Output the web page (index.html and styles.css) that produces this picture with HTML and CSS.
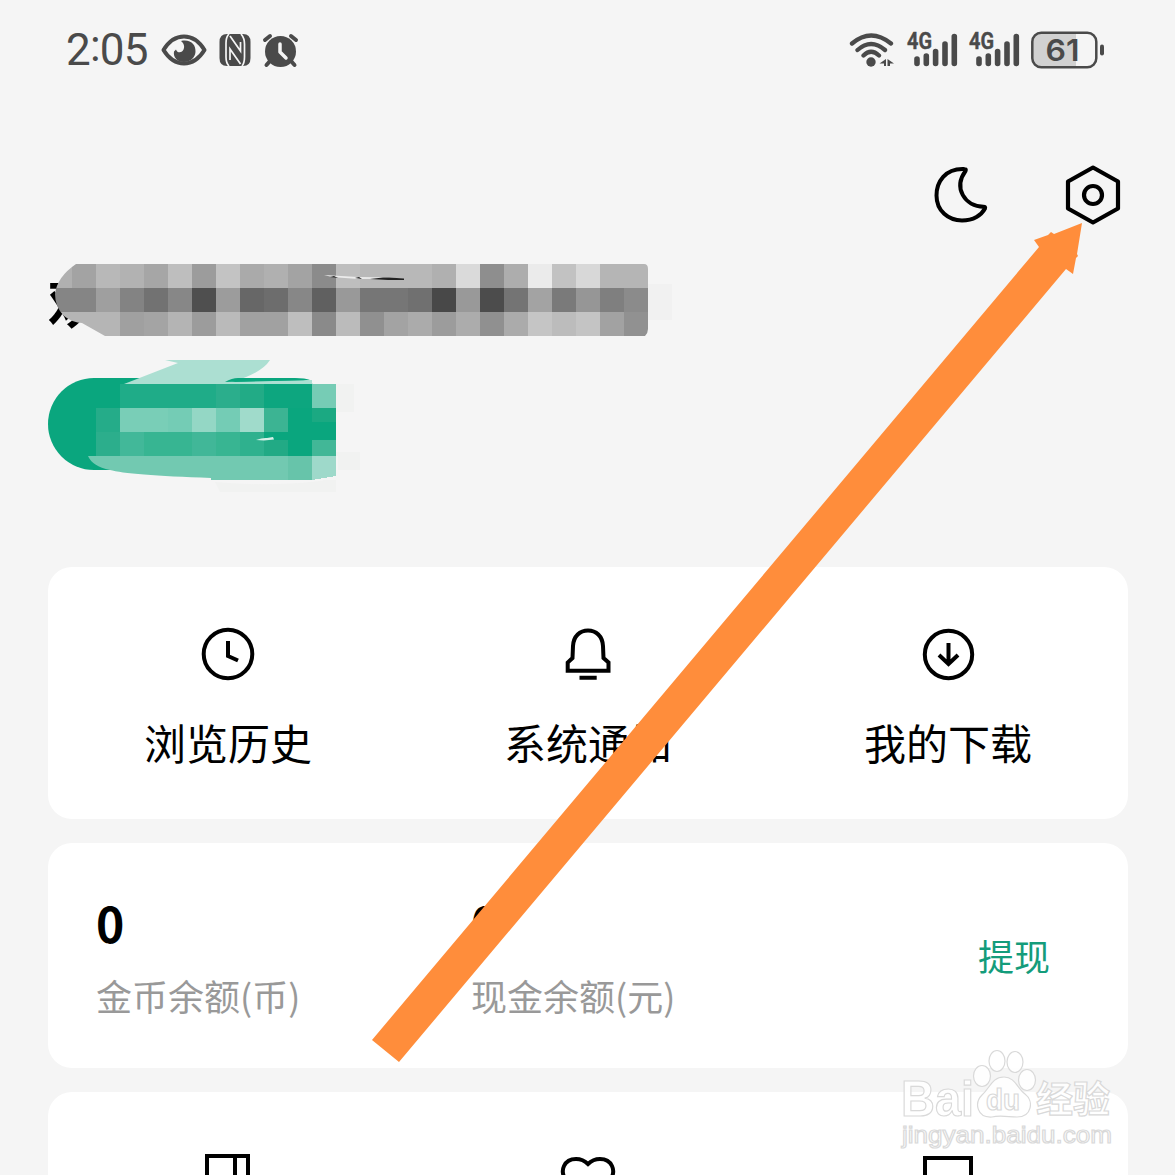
FILE: index.html
```html
<!DOCTYPE html>
<html lang="zh-CN">
<head>
<meta charset="utf-8">
<title>我的</title>
<link rel="stylesheet" href="styles.css">
</head>
<body>
<div class="screen">
  <header class="status">
    <div class="status-left">
      <span class="time">2<i>:</i>05</span>
      <svg class="eye" width="46" height="34" viewBox="0 0 46 34"><path d="M2.5 17C8 8 15 3.500 23 3.500S38 8 43.500 17C38 26 31 30.500 23 30.500S8 26 2.500 17Z" fill="none" stroke="#4a4a4a" stroke-width="4" stroke-linejoin="round"/><path d="M20 8C30 6 35 12 34.500 19C34 25 29 29 23 29C16 29 12 24 13 18.500L15 16.500C16 19.500 19 20 21 18.500C24 16 24 11 20 8Z" fill="#4a4a4a"/></svg>
      <svg class="nfc" width="32" height="33" viewBox="0 0 32 33"><path d="M8 0H24Q31.500 0 31.500 8V24Q31.500 32 24 32H8Q.5 32 .5 24V8Q.5 0 8 0Z" fill="#4a4a4a"/><path d="M10 0Q7 3 7 9V23Q7 29 10 32M11 2L21.500 17V8M22 0Q25.500 4 25.500 10V23Q25.500 29 23 32M21.500 30L11 15V26" fill="none" stroke="#f5f5f5" stroke-width="1.700"/></svg>
      <svg class="alarm" width="37" height="35" viewBox="0 0 37 35"><g stroke="#4a4a4a" stroke-width="4" stroke-linecap="round"><path d="M3 7L8 3M29 3L34 7M8 28L4.500 32M29 28L32.500 32"/></g><circle cx="18.500" cy="18.500" r="15.500" fill="#4a4a4a"/><path d="M18 11V19L24 25" fill="none" stroke="#f5f5f5" stroke-width="3.500" stroke-linecap="round" stroke-linejoin="round"/></svg>
    </div>
    <div class="status-right">
      <svg class="wifi" width="46" height="36" viewBox="0 0 46 36"><g fill="none" stroke="#4a4a4a" stroke-width="4.300" stroke-linecap="round"><path d="M3 11.500Q22 -4.500 42 11.500M8.500 18Q22 6 36 18M14.500 23.500Q22 16 30 23.500"/></g><circle cx="22" cy="30" r="4.700" fill="#4a4a4a"/><path d="M37 27V34H35V31.500H30.500ZM38.500 27L45 31.500H41V34H38.500Z" fill="#4a4a4a"/></svg>
      <svg class="signal" width="51" height="36" viewBox="0 0 51 36"><text x="0" y="17" class="net" textLength="25" lengthAdjust="spacingAndGlyphs">4G</text><path d="M10 27V31.500M19.300 24V31.500M28.600 19.500V31.500M38 12V31.500M47.300 4.500V31.500" stroke="#4a4a4a" stroke-width="5.600" stroke-linecap="round"/></svg>
      <svg class="signal" width="51" height="36" viewBox="0 0 51 36"><text x="0" y="17" class="net" textLength="25" lengthAdjust="spacingAndGlyphs">4G</text><path d="M10 27V31.500M19.300 24V31.500M28.600 19.500V31.500M38 12V31.500M47.300 4.500V31.500" stroke="#4a4a4a" stroke-width="5.600" stroke-linecap="round"/></svg>
      <svg class="battery" width="74" height="38" viewBox="0 0 74 38"><path d="M10 2H45V36H10Q2 36 2 28V10Q2 2 10 2Z" fill="#d1d1d1"/><rect x="1.300" y="1.800" width="64" height="34.400" rx="9" fill="none" stroke="#4a4a4a" stroke-width="2.500"/><rect x="69" y="13.500" width="4" height="11" rx="2" fill="#4a4a4a"/><text x="14.500" y="30" class="level" textLength="34" lengthAdjust="spacingAndGlyphs">61</text></svg>
    </div>
  </header>

  <nav class="actions">
    <svg width="56" height="60" viewBox="0 0 56 60"><path d="M30.500 4C11 3 2.500 17 2.500 30.500C2.500 46 14.500 55.500 28 55.500C39.500 55.500 47.500 50 51 43.500Q51.700 41.700 49.500 41.700C31 41.500 19 23 31.500 6Q32.500 4 30.500 4Z" fill="none" stroke="#000" stroke-width="4" stroke-linejoin="round"/></svg>
    <svg width="56" height="60" viewBox="0 0 56 60"><path d="M28 2.500L53 16.500V43.500L28 57.500L3 43.500V16.500Z" fill="none" stroke="#000" stroke-width="4.200" stroke-linejoin="round"/><circle cx="28" cy="30" r="9" fill="none" stroke="#000" stroke-width="4.200"/></svg>
  </nav>

  <section class="profile">
    <div class="name">
      <span class="name-text">欢</span>
      <svg class="name-mask" width="640" height="72" viewBox="0 0 640 72">
        <defs><clipPath id="brush"><path d="M28 0H596Q600 0 600 5V65Q600 69 597 72H57L34 59Q25 59 16 52Q7 43 7 30Q9 13 28 0Z"/></clipPath></defs>
        <path d="M600 20H624V56H600Z" fill="#f1f1f1"/>
        <g clip-path="url(#brush)" shape-rendering="crispEdges">
          <g>
            <path fill="#b0b0b0" d="M0 0h24v24H0z"/><path fill="#a3a3a3" d="M24 0h24v24H24z"/><path fill="#b8b8b8" d="M48 0h24v24H48z"/><path fill="#b2b2b2" d="M72 0h24v24H72z"/><path fill="#a6a6a6" d="M96 0h24v24H96z"/><path fill="#bebebe" d="M120 0h24v24h-24z"/><path fill="#9c9c9c" d="M144 0h24v24h-24z"/><path fill="#c3c3c3" d="M168 0h24v24h-24z"/><path fill="#aaa" d="M192 0h24v24h-24z"/><path fill="#b0b0b0" d="M216 0h24v24h-24z"/><path fill="#a3a3a3" d="M240 0h24v24h-24z"/><path fill="#8b8b8b" d="M264 0h24v24h-24z"/><path fill="#bebebe" d="M288 0h24v24h-24z"/><path fill="#b8b8b8" d="M312 0h72v24h-72z"/><path fill="#b0b0b0" d="M384 0h24v24h-24z"/><path fill="#dadada" d="M408 0h24v24h-24z"/><path fill="#8e8e8e" d="M432 0h24v24h-24z"/><path fill="#adadad" d="M456 0h24v24h-24z"/><path fill="#ebebeb" d="M480 0h24v24h-24z"/><path fill="#c2c2c2" d="M504 0h24v24h-24z"/><path fill="#d8d8d8" d="M528 0h24v24h-24z"/><path fill="#b5b5b5" d="M552 0h48v24h-48z"/>
          </g>
          <g transform="translate(0 24)">
            <path fill="#858585" d="M0 0h48v24H0z"/><path fill="#9f9f9f" d="M48 0h24v24H48z"/><path fill="#838383" d="M72 0h24v24H72z"/><path fill="#727272" d="M96 0h24v24H96z"/><path fill="#878787" d="M120 0h24v24h-24z"/><path fill="#4f4f4f" d="M144 0h24v24h-24z"/><path fill="#9c9c9c" d="M168 0h24v24h-24z"/><path fill="#676767" d="M192 0h24v24h-24z"/><path fill="#6d6d6d" d="M216 0h24v24h-24z"/><path fill="#878787" d="M240 0h24v24h-24z"/><path fill="#606060" d="M264 0h24v24h-24z"/><path fill="#999" d="M288 0h24v24h-24z"/><path fill="#767676" d="M312 0h48v24h-48z"/><path fill="#707070" d="M360 0h24v24h-24z"/><path fill="#484848" d="M384 0h24v24h-24z"/><path fill="#999" d="M408 0h24v24h-24z"/><path fill="#4c4c4c" d="M432 0h24v24h-24z"/><path fill="#747474" d="M456 0h24v24h-24z"/><path fill="#a3a3a3" d="M480 0h24v24h-24z"/><path fill="#7a7a7a" d="M504 0h24v24h-24z"/><path fill="#969696" d="M528 0h24v24h-24z"/><path fill="#7f7f7f" d="M552 0h24v24h-24z"/><path fill="#8b8b8b" d="M576 0h24v24h-24z"/>
          </g>
          <g transform="translate(0 48)">
            <path fill="#b5b5b5" d="M0 0h72v24H0z"/><path fill="#a0a0a0" d="M72 0h24v24H72z"/><path fill="#a4a4a4" d="M96 0h24v24H96z"/><path fill="#b4b4b4" d="M120 0h24v24h-24z"/><path fill="#9c9c9c" d="M144 0h24v24h-24z"/><path fill="#bababa" d="M168 0h24v24h-24z"/><path fill="#a1a1a1" d="M192 0h48v24h-48z"/><path fill="#bebebe" d="M240 0h24v24h-24z"/><path fill="#8a8a8a" d="M264 0h24v24h-24z"/><path fill="#bbb" d="M288 0h24v24h-24z"/><path fill="#909090" d="M312 0h24v24h-24z"/><path fill="#a3a3a3" d="M336 0h24v24h-24z"/><path fill="#ababab" d="M360 0h24v24h-24z"/><path fill="#9c9c9c" d="M384 0h24v24h-24z"/><path fill="#acacac" d="M408 0h24v24h-24z"/><path fill="#909090" d="M432 0h24v24h-24z"/><path fill="#ababab" d="M456 0h24v24h-24z"/><path fill="#c5c5c5" d="M480 0h24v24h-24z"/><path fill="#bcbcbc" d="M504 0h24v24h-24z"/><path fill="#c4c4c4" d="M528 0h24v24h-24z"/><path fill="#a2a2a2" d="M552 0h24v24h-24z"/><path fill="#919191" d="M576 0h24v24h-24z"/>
          </g>
        </g>
        <path d="M276 11L310 13L340 13.500L356 14.500L310 15L284 13Z" fill="#ececec"/>
        <path d="M282 13L286 12L290 14ZM307 14L311 13L314 15ZM322 15L335 13.500H341L356 14.500V16H340Z" fill="#222"/>
      </svg>
    </div>
    <svg class="badge" width="312" height="132" viewBox="0 0 312 132">
      <path d="M288 24H306V52H288ZM288 92H312V110H288ZM167 122Q240 128 288 118V132H172Z" fill="#f1f2f1"/>
      <rect x="0" y="18" width="288" height="92" rx="46" fill="#0aa67e"/>
      <path d="M117 0H222Q214 13 184 22L264 20V24H76L130 3Z" fill="#acdfd2"/>
      <path d="M177 22Q184 18 190 18H246Q258 18 262 20L210 21Z" fill="#0aa67e"/>
      <g shape-rendering="crispEdges">
        <path fill="#0da67f" d="M72 24h192v24H72z"/><path fill="#1fac88" d="M72 24h96v24H72z"/><path fill="#2bae8c" d="M168 24h24v24h-24z"/><path fill="#22ab86" d="M192 24h24v24h-24z"/><path fill="#76ccb5" d="M264 24h24v24h-24z"/>
        <path fill="#25ac89" d="M48 48h24v24H48z"/><path fill="#79ceb7" d="M72 48h48v24H72z"/><path fill="#74ccb5" d="M120 48h24v24h-24z"/><path fill="#94d7c5" d="M144 48h24v24h-24z"/><path fill="#74ccb5" d="M168 48h24v24h-24z"/><path fill="#a0dbcb" d="M192 48h24v24h-24z"/><path fill="#3cb493" d="M216 48h24v24h-24z"/><path fill="#1ba982" d="M264 48h24v16h-24z"/>
        <path fill="#2cae8c" d="M48 72h24v24H48z"/><path fill="#42b899" d="M72 72h24v24H72z"/><path fill="#37b592" d="M96 72h48v24H96z"/><path fill="#41b798" d="M144 72h24v24h-24z"/><path fill="#38b592" d="M168 72h24v24h-24z"/><path fill="#2fb18e" d="M192 72h24v24h-24z"/><path fill="#22aa85" d="M216 80h24v16h-24z"/><path fill="#0aa67e" d="M240 72h24v24h-24z"/>
        <path fill="#f5f5f5" d="M264 96h26v24h-26z"/><path fill="#0aa67e" d="M264 62h24v18h-24z"/><path fill="#42b797" d="M264 80h24v16h-24z"/><path fill="#9ed9ca" d="M264 96h24v20l-24 4z"/>
        <path fill="#67c4aa" d="M240 96h24v24h-24z"/>
      </g>
      <path d="M40 96H240V120H163V118Q80 115 62 110Q44 106 40 96Z" fill="#72c9b1"/>
      <path d="M208 80Q215 77.500 219 78L225 77L226 79.500L216 80.500Z" fill="#d8f0e9"/>
    </svg>
  </section>

  <main class="cards">
    <section class="card shortcuts">
      <a class="item"><svg width="56" height="56" viewBox="0 0 56 56"><g fill="none" stroke="#000" stroke-width="4"><circle cx="28" cy="28" r="24.300"/><path d="M28 15V30L38 34.500"/></g></svg><span>浏览历史</span></a>
      <a class="item"><svg width="56" height="56" viewBox="0 0 56 56"><path d="M7.700 44.700V36.500L12.500 32L13 20C13.500 10 20 4.500 28 4.500S42.500 10 43 20L43.500 32L48.500 36.500V44.700ZM19.500 51.700H36.700" fill="none" stroke="#000" stroke-width="4"/></svg><span>系统通知</span></a>
      <a class="item"><svg width="56" height="56" viewBox="0 0 56 56"><g fill="none" stroke="#000" stroke-width="4"><circle cx="28.500" cy="28.500" r="23.700"/><path d="M28.500 17V38.500M19 29L28.500 38L38 29"/></g></svg><span>我的下载</span></a>
    </section>
    <section class="card wallet">
      <div class="balance"><b>0</b><span>金币余额(币)</span></div>
      <div class="balance"><b>0</b><span>现金余额(元)</span></div>
      <a class="withdraw">提现</a>
    </section>
    <section class="card shortcuts more">
      <a class="item"><svg width="56" height="56" viewBox="0 0 56 56"><path d="M7 54V5H48V54ZM35 5V54" fill="none" stroke="#000" stroke-width="4"/></svg></a>
      <a class="item"><svg width="56" height="56" viewBox="0 0 56 56"><path d="M28 52L7 31C-2 19 5 8 16 8Q23 8 28 13Q33 8 40 8C51 8 58 19 49 31Z" fill="none" stroke="#000" stroke-width="4"/></svg></a>
      <a class="item"><svg width="56" height="56" viewBox="0 0 56 56"><path d="M5 7H51V50H5Z" fill="none" stroke="#000" stroke-width="4"/></svg></a>
    </section>
  </main>

  <svg class="pointer" width="720" height="850" viewBox="368 218 720 850"><path d="M372 1040L1039 247L1034 240L1048 235L1051 232L1054 234L1082 223L1077 254L1078 256L1076 258L1073 274L1066 269L399 1062Z" fill="#ff8d3b"/></svg>

  <svg class="watermark" width="220" height="110" viewBox="896 1044 220 110">
    <g fill="#fff" stroke="#d9d9d9" stroke-width="1.200" fill-opacity=".85">
      <text x="901" y="1116" class="wm-brand" textLength="73" lengthAdjust="spacingAndGlyphs">Bai</text>
      <ellipse cx="982" cy="1076" rx="8.500" ry="10.500"/><ellipse cx="997" cy="1061" rx="8" ry="10.500"/><ellipse cx="1015" cy="1062" rx="8" ry="10.500"/><ellipse cx="1027" cy="1080" rx="8.500" ry="10.500"/>
      <path d="M1004 1077C1015 1077 1017 1088 1025 1094C1034 1101 1032 1117 1017 1117C1009 1117 1000 1115 992 1117C977 1118 974 1103 982 1095C990 1088 992 1077 1004 1077Z"/>
      <text x="986" y="1110" class="wm-du" textLength="34" lengthAdjust="spacingAndGlyphs">du</text>
      <text x="1036" y="1113" class="wm-cn">经验</text>
      <text x="902" y="1143" class="wm-url" textLength="210" lengthAdjust="spacingAndGlyphs">jingyan.baidu.com</text>
    </g>
  </svg>
</div>
</body>
</html>
```
FILE: styles.css
```css
* { box-sizing: border-box; }

body {
  margin: 0;
  background: #f5f5f5;
  color: #000;
  font-family: "Noto Sans CJK SC", sans-serif;
}

svg { display: block; flex: none; }

.screen {
  position: relative;
  width: 1175px;
  height: 1175px;
  overflow: hidden;
  background: #f5f5f5;
}

.status {
  display: flex;
  justify-content: space-between;
  align-items: center;
  height: 100px;
  padding: 0 70px 0 66px;
  color: #4a4a4a;
}

.status-left,
.status-right { display: flex; align-items: center; }

.time {
  width: 95px;
  font-family: Roboto, sans-serif;
  font-size: 44px;
  line-height: 60px;
  letter-spacing: -0.8px;
}
.time i { font-style: normal; vertical-align: 4px; line-height: 1; }

.nfc { margin-left: 12px; }
.alarm { margin-left: 11px; }
.wifi { margin-right: 1px; }
.signal { margin-left: 11px; overflow: visible; }
.battery { margin-left: 11px; }

.net, .level {
  fill: #4a4a4a;
  font-family: Inter, sans-serif;
  font-weight: 600;
}
.net { font-family: Roboto, sans-serif; font-size: 23px; stroke: #4a4a4a; stroke-width: 0.5px; }
.level { font-size: 30px; }

.actions {
  display: flex;
  justify-content: flex-end;
  gap: 75px;
  height: 164px;
  padding: 65px 54px 0 0;
}

.profile { height: 303px; padding-left: 48px; }

.name { position: relative; height: 96px; }

.name-text {
  display: block;
  font-size: 54px;
  line-height: 74px;
  font-weight: 700;
}

.name-mask { position: absolute; left: 0; top: 0; }

.cards {
  display: flex;
  flex-direction: column;
  gap: 24px;
  padding: 0 47px 0 48px;
}

.card { border-radius: 24px; background: #fff; }

.shortcuts {
  display: grid;
  grid-template-columns: repeat(3, 1fr);
  height: 252px;
  padding-top: 59px;
}

.item {
  display: flex;
  flex-direction: column;
  align-items: center;
  gap: 30px;
  font-size: 42px;
  line-height: 60px;
}

.wallet {
  display: grid;
  grid-template-columns: 375px 1fr auto;
  height: 225px;
  padding: 44px 78px 0 48px;
}

.balance { display: flex; flex-direction: column; gap: 16px; }
.balance b { font-size: 48px; line-height: 70px; }
.balance span { color: #999; font-size: 36px; line-height: 44px; }

.withdraw {
  padding-top: 46px;
  color: #149c7b;
  font-size: 36px;
  line-height: 44px;
}

.pointer { position: absolute; left: 368px; top: 218px; }
.watermark { position: absolute; left: 896px; top: 1044px; }

.wm-brand, .wm-url, .wm-du { font-family: "Liberation Sans", sans-serif; }
.wm-brand { font-size: 50px; font-weight: 700; }
.wm-du { font-size: 29px; font-weight: 700; }
.wm-cn { font-size: 37px; font-weight: 700; }
.wm-url { font-size: 24px; }
```
